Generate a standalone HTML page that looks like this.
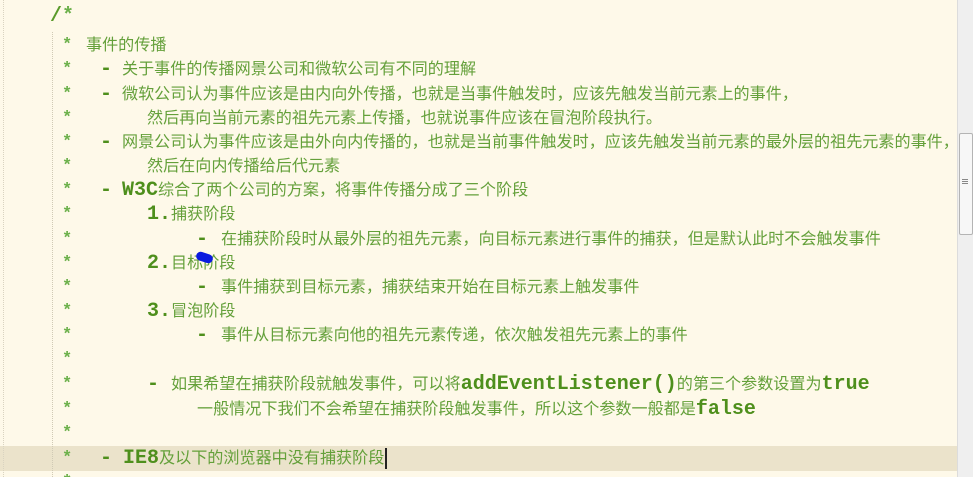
<!DOCTYPE html>
<html><head><meta charset="utf-8"><style>
html,body{margin:0;width:973px;height:477px;overflow:hidden;}
body{background:#fef9e9;position:relative;font-family:"Liberation Sans","Noto Sans CJK SC",sans-serif;}
.l{position:absolute;height:24px;line-height:24px;white-space:nowrap;color:#64a03a;font-size:16.1px;}
.m{font-family:"Liberation Mono",monospace;font-weight:bold;font-size:20px;color:#4e8f1c;}
.s{position:absolute;left:62px;color:#6bb04a;font-family:"Liberation Mono",monospace;font-weight:bold;font-size:17px;height:24px;line-height:26px;}
#hl{position:absolute;left:0;top:446px;width:957px;height:25px;background:#ebe3cb;}
#sb{position:absolute;left:957px;top:0;width:16px;height:477px;background:#efefef;border-left:1px solid #dcdcdc;}
#th{position:absolute;left:959px;top:133px;width:12px;height:100px;background:#f7f7f7;border:1px solid #b4b4b4;border-radius:2px;}
.g1{position:absolute;left:3px;top:0;height:477px;border-left:1px dotted #d9d3c0;}
.g2{position:absolute;left:52px;top:32px;height:445px;border-left:1px dotted #d0cab5;}
.cur{display:inline-block;width:2px;height:21px;background:#222;vertical-align:middle;margin-left:1px;}
</style></head><body>
<div id="hl"></div>
<div class="g1"></div><div class="g2"></div>
<div class="l m" style="top:5px;left:50px;color:#5a9a2a">/<span style="color:#6bb04a">*</span></div>

<div class="s" style="top:33px">*</div><div class="l" style="top:33px;left:86px">事件的传播</div>
<div class="s" style="top:57px">*</div><div class="l" style="top:57px;left:100px"><span class="m">-</span></div><div class="l" style="top:57px;left:122px">关于事件的传播网景公司和微软公司有不同的理解</div>
<div class="s" style="top:82px">*</div><div class="l" style="top:82px;left:100px"><span class="m">-</span></div><div class="l" style="top:82px;left:122px">微软公司认为事件应该是由内向外传播，也就是当事件触发时，应该先触发当前元素上的事件，</div>
<div class="s" style="top:106px">*</div><div class="l" style="top:106px;left:147px">然后再向当前元素的祖先元素上传播，也就说事件应该在冒泡阶段执行。</div>
<div class="s" style="top:130px">*</div><div class="l" style="top:130px;left:100px"><span class="m">-</span></div><div class="l" style="top:130px;left:122px">网景公司认为事件应该是由外向内传播的，也就是当前事件触发时，应该先触发当前元素的最外层的祖先元素的事件，</div>
<div class="s" style="top:154px">*</div><div class="l" style="top:154px;left:147px">然后在向内传播给后代元素</div>
<div class="s" style="top:178px">*</div><div class="l" style="top:178px;left:100px"><span class="m">-</span></div><div class="l" style="top:178px;left:122px"><span class="m">W3C</span>综合了两个公司的方案，将事件传播分成了三个阶段</div>
<div class="s" style="top:202px">*</div><div class="l" style="top:202px;left:147px"><span class="m">1.</span>捕获阶段</div>
<div class="s" style="top:227px">*</div><div class="l" style="top:227px;left:196px"><span class="m">-</span></div><div class="l" style="top:227px;left:221px">在捕获阶段时从最外层的祖先元素，向目标元素进行事件的捕获，但是默认此时不会触发事件</div>
<div class="s" style="top:251px">*</div><div class="l" style="top:251px;left:147px"><span class="m">2.</span>目标阶段</div>
<div style="position:absolute;left:196px;top:253px;width:17px;height:9px;background:#0a1adf;border-radius:6px;transform:rotate(18deg)"></div>
<div class="s" style="top:275px">*</div><div class="l" style="top:275px;left:196px"><span class="m">-</span></div><div class="l" style="top:275px;left:221px">事件捕获到目标元素，捕获结束开始在目标元素上触发事件</div>
<div class="s" style="top:299px">*</div><div class="l" style="top:299px;left:147px"><span class="m">3.</span>冒泡阶段</div>
<div class="s" style="top:323px">*</div><div class="l" style="top:323px;left:196px"><span class="m">-</span></div><div class="l" style="top:323px;left:221px">事件从目标元素向他的祖先元素传递，依次触发祖先元素上的事件</div>
<div class="s" style="top:347px">*</div>
<div class="s" style="top:372px">*</div><div class="l" style="top:372px;left:147px"><span class="m">-</span></div><div class="l" style="top:372px;left:171px">如果希望在捕获阶段就触发事件，可以将<span class="m">addEventListener()</span>的第三个参数设置为<span class="m">true</span></div>
<div class="s" style="top:397px">*</div><div class="l" style="top:397px;left:197px">一般情况下我们不会希望在捕获阶段触发事件，所以这个参数一般都是<span class="m">false</span></div>
<div class="s" style="top:421px">*</div>
<div class="s" style="top:446px">*</div><div class="l" style="top:446px;left:100px"><span class="m">-</span></div><div class="l" style="top:446px;left:123px"><span class="m">IE8</span>及以下的浏览器中没有捕获阶段<span class="cur"></span></div>
<div class="s" style="top:470px">*</div>
<div id="sb"></div><div id="th"></div>
<div style="position:absolute;left:962px;top:179px;width:6px;height:1px;background:#888;box-shadow:0 2px 0 #888,0 4px 0 #888"></div>
</body></html>
